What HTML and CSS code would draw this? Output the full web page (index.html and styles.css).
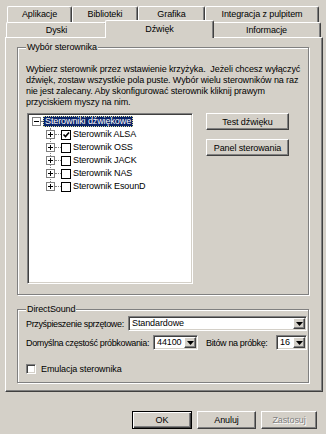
FILE: index.html
```html
<!DOCTYPE html>
<html lang="pl">
<head>
  <meta charset="UTF-8">
  <meta name="viewport" content="width=device-width, initial-scale=1.0">
  <title>Konfiguracja Wine - Dźwięk</title>
  <link rel="stylesheet" href="styles.css">
</head>
<body>
  <div class="dialog">
    <div class="tabs">
      <div class="tab-row back">
        <div class="tab tab-apps">Aplikacje</div>
        <div class="tab tab-libs">Biblioteki</div>
        <div class="tab tab-gfx">Grafika</div>
        <div class="tab tab-desk">Integracja z pulpitem</div>
      </div>
      <div class="tab-row front">
        <div class="tab tab-drives">Dyski</div>
        <div class="tab tab-audio active">Dźwięk</div>
        <div class="tab tab-about">Informacje</div>
      </div>
    </div>

    <div class="panel">
      <!-- driver selection -->
      <div class="group drivers">
        <span class="group-title">Wybór sterownika</span>
        <p class="hint">
          Wybierz sterownik przez wstawienie krzyżyka.&nbsp; Jeżeli chcesz wyłączyć<br>
          dźwięk, zostaw wszystkie pola puste. Wybór wielu sterowników na raz<br>
          nie jest zalecany. Aby skonfigurować sterownik kliknij prawym<br>
          przyciskiem myszy na nim.
        </p>
        <div class="drivers-body">
          <div class="tree">
            <div class="node root">
              <svg class="expander" width="9" height="9" viewBox="0 0 9 9"><rect x="0.5" y="0.5" width="8" height="8" fill="#fff" stroke="#808080"/><path d="M2 4.5h5" stroke="#000"/></svg>
              <span class="twig"></span>
              <span class="node-label selected">Sterowniki dźwiękowe</span>
            </div>
            <ul class="children">
              <li class="node">
                <svg class="expander" width="9" height="9" viewBox="0 0 9 9"><rect x="0.5" y="0.5" width="8" height="8" fill="#fff" stroke="#808080"/><path d="M2 4.5h5M4.5 2v5" stroke="#000"/></svg>
                <span class="twig"></span>
                <svg class="check" width="10" height="10" viewBox="0 0 10 10"><rect x="0.5" y="0.5" width="9" height="9" fill="#fff" stroke="#000"/><path d="M2.5 4.5l2 2 3.5-4" fill="none" stroke="#000" stroke-width="1.6"/></svg>
                <span class="node-label">Sterownik ALSA</span>
              </li>
              <li class="node">
                <svg class="expander" width="9" height="9" viewBox="0 0 9 9"><rect x="0.5" y="0.5" width="8" height="8" fill="#fff" stroke="#808080"/><path d="M2 4.5h5M4.5 2v5" stroke="#000"/></svg>
                <span class="twig"></span>
                <svg class="check" width="10" height="10" viewBox="0 0 10 10"><rect x="0.5" y="0.5" width="9" height="9" fill="#fff" stroke="#000"/></svg>
                <span class="node-label">Sterownik OSS</span>
              </li>
              <li class="node">
                <svg class="expander" width="9" height="9" viewBox="0 0 9 9"><rect x="0.5" y="0.5" width="8" height="8" fill="#fff" stroke="#808080"/><path d="M2 4.5h5M4.5 2v5" stroke="#000"/></svg>
                <span class="twig"></span>
                <svg class="check" width="10" height="10" viewBox="0 0 10 10"><rect x="0.5" y="0.5" width="9" height="9" fill="#fff" stroke="#000"/></svg>
                <span class="node-label">Sterownik JACK</span>
              </li>
              <li class="node">
                <svg class="expander" width="9" height="9" viewBox="0 0 9 9"><rect x="0.5" y="0.5" width="8" height="8" fill="#fff" stroke="#808080"/><path d="M2 4.5h5M4.5 2v5" stroke="#000"/></svg>
                <span class="twig"></span>
                <svg class="check" width="10" height="10" viewBox="0 0 10 10"><rect x="0.5" y="0.5" width="9" height="9" fill="#fff" stroke="#000"/></svg>
                <span class="node-label">Sterownik NAS</span>
              </li>
              <li class="node">
                <svg class="expander" width="9" height="9" viewBox="0 0 9 9"><rect x="0.5" y="0.5" width="8" height="8" fill="#fff" stroke="#808080"/><path d="M2 4.5h5M4.5 2v5" stroke="#000"/></svg>
                <span class="twig"></span>
                <svg class="check" width="10" height="10" viewBox="0 0 10 10"><rect x="0.5" y="0.5" width="9" height="9" fill="#fff" stroke="#000"/></svg>
                <span class="node-label">Sterownik EsounD</span>
              </li>
            </ul>
          </div>
          <div class="side-buttons">
            <button class="btn side-btn" type="button">Test dźwięku</button>
            <button class="btn side-btn" type="button">Panel sterowania</button>
          </div>
        </div>
      </div>

      <!-- DirectSound options -->
      <div class="group dsound">
        <span class="group-title">DirectSound</span>
        <div class="ds-row row-accel">
          <span class="ds-label label-accel">Przyśpieszenie sprzętowe:</span>
          <div class="combo combo-accel">
            <span class="combo-text">Standardowe</span>
            <span class="combo-btn"><svg width="7" height="4" viewBox="0 0 7 4"><path d="M0 0h7L3.5 4z"/></svg></span>
          </div>
        </div>
        <div class="ds-row row-rate">
          <span class="ds-label label-rate">Domyślna częstość próbkowania:</span>
          <div class="combo combo-rate">
            <span class="combo-text">44100</span>
            <span class="combo-btn"><svg width="7" height="4" viewBox="0 0 7 4"><path d="M0 0h7L3.5 4z"/></svg></span>
          </div>
          <span class="ds-label label-bits">Bitów na próbkę:</span>
          <div class="combo combo-bits">
            <span class="combo-text">16</span>
            <span class="combo-btn"><svg width="7" height="4" viewBox="0 0 7 4"><path d="M0 0h7L3.5 4z"/></svg></span>
          </div>
        </div>
        <label class="ds-row row-emu">
          <span class="checkbox"></span>
          <span class="check-label">Emulacja sterownika</span>
        </label>
      </div>
    </div>

    <div class="footer">
      <button class="btn default btn-ok" type="button">OK</button>
      <button class="btn btn-cancel" type="button">Anuluj</button>
      <button class="btn btn-apply" type="button" disabled>Zastosuj</button>
    </div>
  </div>
</body>
</html>
```

FILE: styles.css
```css
* {
  box-sizing: border-box;
}

body {
  margin: 0;
  background-color: #d4d0c8;
  font-family: "Liberation Sans", Arial, sans-serif;
  font-size: 9px;
  letter-spacing: -0.1px;
  color: #000;
}

.dialog {
  width: 326px;
  height: 434px;
  padding: 6px 0 0 5px;
}

/* tabs */
.tab-row {
  display: flex;
}

.tab-row.back {
  height: 16px;
  margin-left: 2px;
}

.tab-row.front {
  height: 15px;
  margin-left: 1px;
}

.tab {
  border-top: 1px solid #fff;
  border-left: 1px solid #fff;
  border-right: 1px solid #404040;
  box-shadow: inset -1px 0 #808080;
  border-radius: 2px 2px 0 0;
  text-align: center;
  white-space: nowrap;
  background-color: #d4d0c8;
}

.back .tab {
  line-height: 15px;
}

.front .tab {
  line-height: 14px;
}

.tab-apps { width: 65px; }
.tab-libs { width: 66px; }
.tab-gfx { width: 67px; }
.tab-desk { width: 114px; }
.tab-drives { width: 101px; }
.tab-audio { width: 105px; }
.tab-about { width: 109px; }

.tab.active {
  position: relative;
  z-index: 1;
  width: 109px;
  margin: -2px -2px -1px;
  padding-top: 1px;
}

/* page */
.panel {
  width: 318px;
  height: 355px;
  border-top: 1px solid #fff;
  border-left: 1px solid #fff;
  border-right: 1px solid #404040;
  border-bottom: 1px solid #404040;
  box-shadow: inset -1px -1px #808080;
  padding: 9px 0 0 11px;
}

.group {
  width: 292px;
  border: 1px solid #808080;
  box-shadow: inset 1px 1px #fff, 1px 1px #fff;
  padding: 0 1px 0 8px;
}

.group-title {
  display: block;
  width: max-content;
  margin-top: -6px;
  padding: 0 1px;
  line-height: 11px;
  background-color: #d4d0c8;
}

.drivers {
  height: 248px;
}

.hint {
  margin: 11px 0 0;
  line-height: 11px;
  white-space: nowrap;
}

.drivers-body {
  display: flex;
  gap: 13px;
  margin-top: 5px;
}

/* tree view */
.tree {
  width: 166px;
  height: 171px;
  margin-left: 1px;
  padding: 1px 0 0 4px;
  background-color: #fff;
  border-top: 1px solid #808080;
  border-left: 1px solid #808080;
  border-right: 1px solid #fff;
  border-bottom: 1px solid #fff;
  box-shadow: inset 1px 1px #404040, inset -1px -1px #d4d0c8;
}

.node {
  display: flex;
  align-items: center;
  height: 13px;
  white-space: nowrap;
}

.expander {
  position: relative;
  flex: none;
}

.check {
  flex: none;
}

.twig {
  flex: none;
  height: 0;
  border-top: 1px dotted #808080;
}

.root .twig {
  width: 2px;
}

.children .twig {
  width: 6px;
}

.node-label {
  line-height: 11px;
  padding: 0 1px;
}

.children .node-label {
  margin-left: 1px;
}

.node-label.selected {
  background-color: #0a246a;
  color: #fff;
  outline: 1px dotted #e8e8a0;
  outline-offset: -1px;
  padding: 0 2px;
}

.children {
  position: relative;
  list-style: none;
  margin: 0;
  padding: 0 0 0 14px;
}

.children::before {
  content: '';
  position: absolute;
  left: 18px;
  top: 0;
  bottom: 7px;
  border-left: 1px dotted #808080;
}

/* buttons */
.btn {
  font-family: inherit;
  font-size: 9px;
  letter-spacing: -0.1px;
  color: #000;
  background-color: #d4d0c8;
  padding: 0;
  border-top: 1px solid #fff;
  border-left: 1px solid #fff;
  border-right: 1px solid #404040;
  border-bottom: 1px solid #404040;
  box-shadow: inset -1px -1px #808080;
  border-radius: 0;
}

.side-buttons {
  display: flex;
  flex-direction: column;
  gap: 9px;
}

.side-btn {
  width: 83px;
  height: 17px;
}

/* DirectSound */
.dsound {
  height: 74px;
  margin-top: 14px;
}

.ds-row {
  display: flex;
  align-items: center;
  white-space: nowrap;
}

.ds-label {
  letter-spacing: -0.35px;
}

.row-accel {
  margin-top: 1px;
}

.row-rate {
  margin-top: 4px;
}

.row-emu {
  margin-top: 14px;
}

.label-accel { width: 102px; }
.label-rate { width: 127px; }
.label-bits {
  width: 70px;
  margin-left: 8px;
}

.combo {
  display: flex;
  align-items: stretch;
  height: 15px;
  border-top: 1px solid #808080;
  border-left: 1px solid #808080;
  border-right: 1px solid #fff;
  border-bottom: 1px solid #fff;
  box-shadow: inset 1px 1px #404040, inset -1px -1px #d4d0c8;
  background-color: #fff;
  padding: 1px;
}

.combo-accel { width: 179px; }
.combo-rate { width: 45px; }
.combo-bits { width: 31px; }

.combo-text {
  flex: 1;
  padding-left: 2px;
  line-height: 11px;
}

.combo-btn {
  display: flex;
  align-items: center;
  justify-content: center;
  width: 12px;
  background-color: #d4d0c8;
  border-top: 1px solid #fff;
  border-left: 1px solid #fff;
  border-right: 1px solid #404040;
  border-bottom: 1px solid #404040;
  box-shadow: inset -1px -1px #808080;
}

.checkbox {
  width: 10px;
  height: 10px;
  background-color: #fff;
  border-top: 1px solid #808080;
  border-left: 1px solid #808080;
  border-right: 1px solid #fff;
  border-bottom: 1px solid #fff;
  box-shadow: inset 1px 1px #404040, inset -1px -1px #d4d0c8;
}

.check-label {
  margin-left: 5px;
}

/* dialog buttons */
.footer {
  display: flex;
  justify-content: flex-end;
  gap: 5px;
  margin-top: 19px;
  padding-right: 9px;
}

.footer .btn {
  height: 18px;
}

.btn-ok { width: 60px; }
.btn-cancel { width: 59px; }
.btn-apply { width: 56px; }

.btn.default {
  border: 1px solid #000;
  box-shadow: inset 1px 1px #fff, inset -1px -1px #404040, inset -2px -2px #808080;
}

.btn:disabled {
  color: #808080;
  text-shadow: 1px 1px #fff;
}
```
